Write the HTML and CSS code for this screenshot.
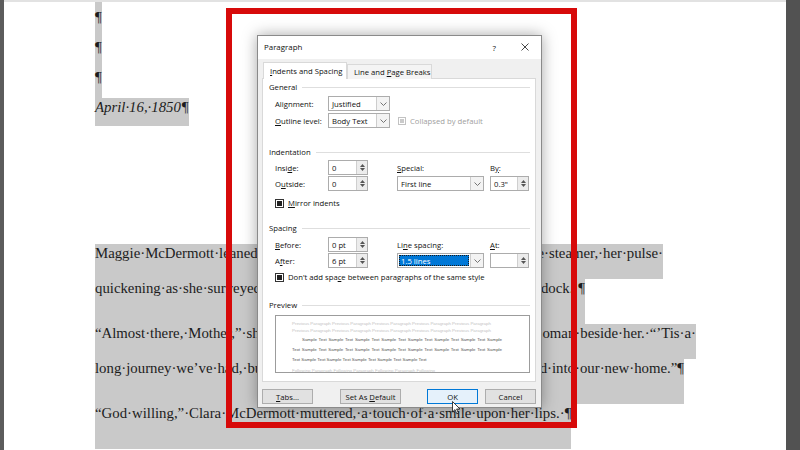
FILE: index.html
```html
<!DOCTYPE html>
<html lang="en">
  <head>
    <meta charset="UTF-8" />
    <title>Paragraph</title>
    <link rel="stylesheet" href="styles.css">
  </head>
  <body>
    <div class="edge"></div>
    <div class="page">
      <div class="marks">
        <div class="ln mark">¶</div>
        <div class="ln mark">¶</div>
        <div class="ln mark">¶</div>
        <div class="ln date">April·16,·1850¶</div>
      </div>
      <div class="story">
        <div class="ln split line-1"><span>Maggie·McDermott·leaned</span><span class="fill">·against·the·wooden·railing·of·th</span><span>e·steamer,·her·pulse·</span></div>
        <div class="ln split end line-2"><span>quickening·as·she·surveyed</span><span class="fill">·the·bustling·throngs·on·the·</span><span>dock.·¶</span></div>
        <div class="ln split line-3"><span>“Almost·there,·Mother,”·sh</span><span class="fill">e·said,·turning·to·the·older·w</span><span>oman·beside·her.·“’Tis·a·</span></div>
        <div class="ln split end line-4"><span>long·journey·we’ve·had,·bu</span><span class="fill">t·soon·we’ll·be·settle</span><span>d·into·our·new·home.”¶</span></div>
        <div class="ln end">“God·willing,”·Clara·McDermott·muttered,·a·touch·of·a·smile·upon·her·lips.·¶</div>
      </div>
    </div>

    <div class="frame"></div>

    <div class="dialog">
      <div class="titlebar">
        <span class="title">Paragraph</span>
        <span class="help">?</span>
        <svg class="close" width="8" height="8" viewBox="0 0 8 8"><path d="M0.5 0.5 7.5 7.5M7.5 0.5 0.5 7.5" stroke="#333" stroke-width="0.9"/></svg>
      </div>

      <div class="tabs">
        <span class="tab active"><span><u>I</u>ndents and Spacing</span></span>
        <span class="tab"><span>Line and <u>P</u>age Breaks</span></span>
      </div>

      <div class="panel">
        <div class="legend legend-general">General</div>
        <div class="row">
          <span>Ali<u>g</u>nment:</span>
          <span class="select sel-short"><span class="val">Justified</span><span class="drop"><svg width="7" height="4" viewBox="0 0 7 4"><path d="M0.5 0.5 3.5 3.5 6.5 0.5" fill="none" stroke="#666" stroke-width="0.9"/></svg></span></span>
        </div>
        <div class="row">
          <span><u>O</u>utline level:</span>
          <span class="select sel-short"><span class="val">Body Text</span><span class="drop"><svg width="7" height="4" viewBox="0 0 7 4"><path d="M0.5 0.5 3.5 3.5 6.5 0.5" fill="none" stroke="#666" stroke-width="0.9"/></svg></span></span>
          <span class="check disabled"><span class="box"></span><span>Collapsed by default</span></span>
        </div>

        <div class="legend legend-indent">Indentation</div>
        <div class="row row-tight">
          <span>Insi<u>d</u>e:</span>
          <span class="spin"><span class="val">0</span><span class="arrows"><svg width="5" height="3" viewBox="0 0 5 3"><path d="M0 3 2.5 0 5 3z" fill="#555"/></svg><svg width="5" height="3" viewBox="0 0 5 3"><path d="M0 0 2.5 3 5 0z" fill="#555"/></svg></span></span>
          <span><u>S</u>pecial:</span>
          <span>B<u>y</u>:</span>
        </div>
        <div class="row row-tight">
          <span>O<u>u</u>tside:</span>
          <span class="spin"><span class="val">0</span><span class="arrows"><svg width="5" height="3" viewBox="0 0 5 3"><path d="M0 3 2.5 0 5 3z" fill="#555"/></svg><svg width="5" height="3" viewBox="0 0 5 3"><path d="M0 0 2.5 3 5 0z" fill="#555"/></svg></span></span>
          <span class="select sel-wide"><span class="val">First line</span><span class="drop"><svg width="7" height="4" viewBox="0 0 7 4"><path d="M0.5 0.5 3.5 3.5 6.5 0.5" fill="none" stroke="#666" stroke-width="0.9"/></svg></span></span>
          <span class="spin spin-by"><span class="val">0.3"</span><span class="arrows"><svg width="5" height="3" viewBox="0 0 5 3"><path d="M0 3 2.5 0 5 3z" fill="#555"/></svg><svg width="5" height="3" viewBox="0 0 5 3"><path d="M0 0 2.5 3 5 0z" fill="#555"/></svg></span></span>
        </div>
        <div class="option option-mirror">
          <span class="check"><span class="box"></span><span><u>M</u>irror indents</span></span>
        </div>

        <div class="legend legend-spacing">Spacing</div>
        <div class="row">
          <span><u>B</u>efore:</span>
          <span class="spin"><span class="val">0 pt</span><span class="arrows"><svg width="5" height="3" viewBox="0 0 5 3"><path d="M0 3 2.5 0 5 3z" fill="#555"/></svg><svg width="5" height="3" viewBox="0 0 5 3"><path d="M0 0 2.5 3 5 0z" fill="#555"/></svg></span></span>
          <span>Li<u>n</u>e spacing:</span>
          <span><u>A</u>t:</span>
        </div>
        <div class="row row-tight">
          <span>A<u>f</u>ter:</span>
          <span class="spin"><span class="val">6 pt</span><span class="arrows"><svg width="5" height="3" viewBox="0 0 5 3"><path d="M0 3 2.5 0 5 3z" fill="#555"/></svg><svg width="5" height="3" viewBox="0 0 5 3"><path d="M0 0 2.5 3 5 0z" fill="#555"/></svg></span></span>
          <span class="select sel-wide"><span class="val picked">1.5 lines</span><span class="drop"><svg width="7" height="4" viewBox="0 0 7 4"><path d="M0.5 0.5 3.5 3.5 6.5 0.5" fill="none" stroke="#666" stroke-width="0.9"/></svg></span></span>
          <span class="spin spin-by"><span class="val"></span><span class="arrows"><svg width="5" height="3" viewBox="0 0 5 3"><path d="M0 3 2.5 0 5 3z" fill="#555"/></svg><svg width="5" height="3" viewBox="0 0 5 3"><path d="M0 0 2.5 3 5 0z" fill="#555"/></svg></span></span>
        </div>
        <div class="option option-space">
          <span class="check"><span class="box"></span><span>Don't add spa<u>c</u>e between paragraphs of the same style</span></span>
        </div>

        <div class="legend legend-preview">Preview</div>
        <div class="preview">
          <div class="pv-prev">Previous Paragraph Previous Paragraph Previous Paragraph Previous Paragraph Previous Paragraph</div>
          <div class="pv-prev">Previous Paragraph Previous Paragraph Previous Paragraph Previous Paragraph Previous Paragraph</div>
          <div class="pv-sample pv-indent">Sample Text Sample Text Sample Text Sample Text Sample Text Sample Text Sample Text Sample</div>
          <div class="pv-sample pv-full">Text Sample Text Sample Text Sample Text Sample Text Sample Text Sample Text Sample Text Sample</div>
          <div class="pv-sample">Text Sample Text Sample Text Sample Text Sample Text Sample Text</div>
          <div class="pv-next">Following Paragraph Following Paragraph Following Paragraph Following</div>
        </div>
      </div>

      <div class="buttons">
        <span class="btn btn-tabs"><span><u>T</u>abs...</span></span>
        <span class="btn btn-default"><span>Set As <u>D</u>efault</span></span>
        <span class="btn btn-ok">OK</span>
        <span class="btn btn-cancel">Cancel</span>
      </div>
    </div>

    <svg class="cursor" width="9" height="14" viewBox="0 0 9 14"><path d="M0.5 0.5 L0.5 11 L3 8.6 L4.8 12.8 L6.4 12.1 L4.6 8 L8 8 Z" fill="#fff" stroke="#111" stroke-width="0.8"/></svg>
  </body>
</html>
```

FILE: styles.css
```css
* {
  box-sizing: border-box;
}

body {
  margin: 0;
  width: 800px;
  height: 450px;
  overflow: hidden;
  display: flex;
  background-color: #525252;
  position: relative;
}

.edge {
  width: 4px;
  background-color: #5c5c5c;
}

/* document page behind the dialog */
.page {
  width: 782px;
  height: 450px;
  background: white;
  border-top: 2px solid #e2e2e2;
  padding-left: 91px;
  overflow: hidden;
  font-family: "Liberation Serif", "Times New Roman", serif;
  font-size: 14.8px;
  color: #1c1c1c;
}

.ln {
  width: max-content;
  white-space: nowrap;
  background-color: #c9c9c9;
  line-height: 17px;
  padding: 1px 0 17px;
}

.ln.end {
  padding-bottom: 27px;
}

.ln.mark {
  padding-bottom: 12px;
}

.ln.mark:first-child {
  padding-top: 7px;
}

.ln.date {
  font-style: italic;
  padding-bottom: 10px;
}

.story {
  margin-top: 118px;
}

/* lines whose middle runs under the dialog */
.ln.split {
  display: flex;
}

.ln.split .fill {
  flex: 1;
}

.line-1 {
  width: 568px;
}

.line-2 {
  width: 490px;
}

.line-3 {
  width: 601px;
}

.line-4 {
  width: 589px;
}

.frame {
  position: absolute;
  left: 226px;
  top: 8px;
  width: 351px;
  height: 420px;
  border: 6px solid #d70a0a;
}

/* the Paragraph dialog */
.dialog {
  position: absolute;
  left: 257px;
  top: 35px;
  width: 285px;
  height: 373px;
  background-color: #f0f0f0;
  border: 1px solid #8a8a8a;
  box-shadow: 0 0 14px rgba(0, 0, 0, 0.35);
  font-family: "Open Sans", "Noto Sans", sans-serif;
  font-size: 7.7px;
  color: #111;
}

.dialog u {
  text-decoration-thickness: 0.6px;
  text-underline-offset: 1px;
}

.titlebar {
  height: 23px;
  background: white;
  display: flex;
  align-items: center;
  padding: 0 12px 1px 6px;
}

.title {
  flex: 1;
  font-size: 7.9px;
}

.help {
  margin-right: 25px;
  font-size: 8px;
}

.tabs {
  height: 20px;
  display: flex;
  align-items: flex-end;
  padding-left: 5px;
  margin-bottom: -1px;
  position: relative;
}

.tab {
  width: 85px;
  height: 15px;
  padding-left: 6px;
  display: flex;
  align-items: center;
  background-color: #f4f4f4;
  border: 1px solid #d9d9d9;
  border-bottom: none;
}

.tab.active {
  width: 84px;
  height: 17px;
  background: white;
  padding-bottom: 1px;
}

.panel {
  margin-left: 4px;
  width: 274px;
  height: 304px;
  background: white;
  border: 1px solid #d9d9d9;
}

.legend {
  display: flex;
  align-items: center;
  height: 14px;
  padding: 0 5px 0 6px;
}

.legend::after {
  content: "";
  flex: 1;
  height: 1px;
  margin-left: 5px;
  background-color: #dedede;
}

.legend-general {
  margin-top: 1px;
}

.legend-indent {
  margin-top: 17px;
}

.legend-spacing {
  margin-top: 11px;
}

.legend-preview {
  margin-top: 14px;
}

.row {
  display: grid;
  grid-template-columns: 53px 69px 93px 39px;
  align-items: center;
  height: 15px;
  padding-left: 12px;
  margin-top: 2px;
}

.row-tight {
  margin-top: 1px;
}

.select,
.spin {
  display: flex;
  height: 15px;
  background: white;
  border: 1px solid #acacac;
}

.select .val,
.spin .val {
  flex: 1;
  display: flex;
  align-items: center;
  padding-left: 3px;
}

.sel-short {
  width: 62px;
}

.sel-wide {
  width: 87px;
}

.drop {
  width: 13px;
  display: flex;
  align-items: center;
  justify-content: center;
  background-color: #f3f3f3;
  border-left: 1px solid #cdcdcd;
}

.val.picked {
  margin: 1px;
  padding-left: 2px;
  background-color: #0078d7;
  color: white;
  outline: 1px dotted #1b1b1b;
  outline-offset: -1px;
}

.spin {
  width: 40px;
}

.spin-by {
  width: 39px;
}

.arrows {
  width: 11px;
  display: flex;
  flex-direction: column;
  align-items: center;
  justify-content: space-around;
  padding: 2px 0;
  background-color: #ececec;
  border-left: 1px solid #cfcfcf;
}

.check {
  display: flex;
  align-items: center;
  white-space: nowrap;
}

.box {
  width: 9px;
  height: 9px;
  margin-right: 4px;
  border: 1px solid #333;
  background: white;
  display: flex;
  align-items: center;
  justify-content: center;
}

.box::after {
  content: "";
  width: 5px;
  height: 5px;
  background-color: #222;
}

.check.disabled {
  color: #a0a0a0;
  margin-left: 1px;
}

.check.disabled .box {
  width: 8px;
  height: 8px;
  border-color: #c2c2c2;
}

.check.disabled .box::after {
  width: 4px;
  height: 4px;
  background-color: #cacaca;
}

.option {
  height: 14px;
  display: flex;
  align-items: center;
  padding-left: 12px;
}

.option-mirror {
  margin-top: 5px;
}

.option-space {
  margin-top: 2px;
}

/* preview box */
.preview {
  margin: 3px 0 0 12px;
  width: 255px;
  height: 58px;
  overflow: hidden;
  border: 1px solid #9c9c9c;
  padding: 4px 0 0 16px;
  font-family: "Liberation Sans", Arial, sans-serif;
  font-size: 4.4px;
  white-space: nowrap;
}

.pv-prev,
.pv-next {
  height: 7px;
  line-height: 7px;
  color: #c4c4c4;
}

.pv-sample {
  height: 10px;
  line-height: 10px;
  color: #555;
}

.pv-indent {
  margin-top: 1px;
  margin-left: 10px;
  width: 200px;
  text-align: justify;
  text-align-last: justify;
}

.pv-full {
  width: 210px;
  text-align: justify;
  text-align-last: justify;
}

.pv-next {
  margin-top: 2px;
  height: 5px;
  overflow: hidden;
}

.buttons {
  display: flex;
  margin-top: 7px;
  padding-left: 4px;
}

.btn {
  height: 15px;
  display: flex;
  align-items: center;
  justify-content: center;
  background-color: #e1e1e1;
  border: 1px solid #adadad;
}

.btn-tabs {
  width: 51px;
}

.btn-default {
  width: 61px;
  margin-left: 27px;
}

.btn-ok {
  width: 51px;
  margin-left: 26px;
  background-color: #e5f1fb;
  border-color: #0078d7;
}

.btn-cancel {
  width: 51px;
  margin-left: 7px;
}

.cursor {
  position: absolute;
  left: 452px;
  top: 401px;
}
```
